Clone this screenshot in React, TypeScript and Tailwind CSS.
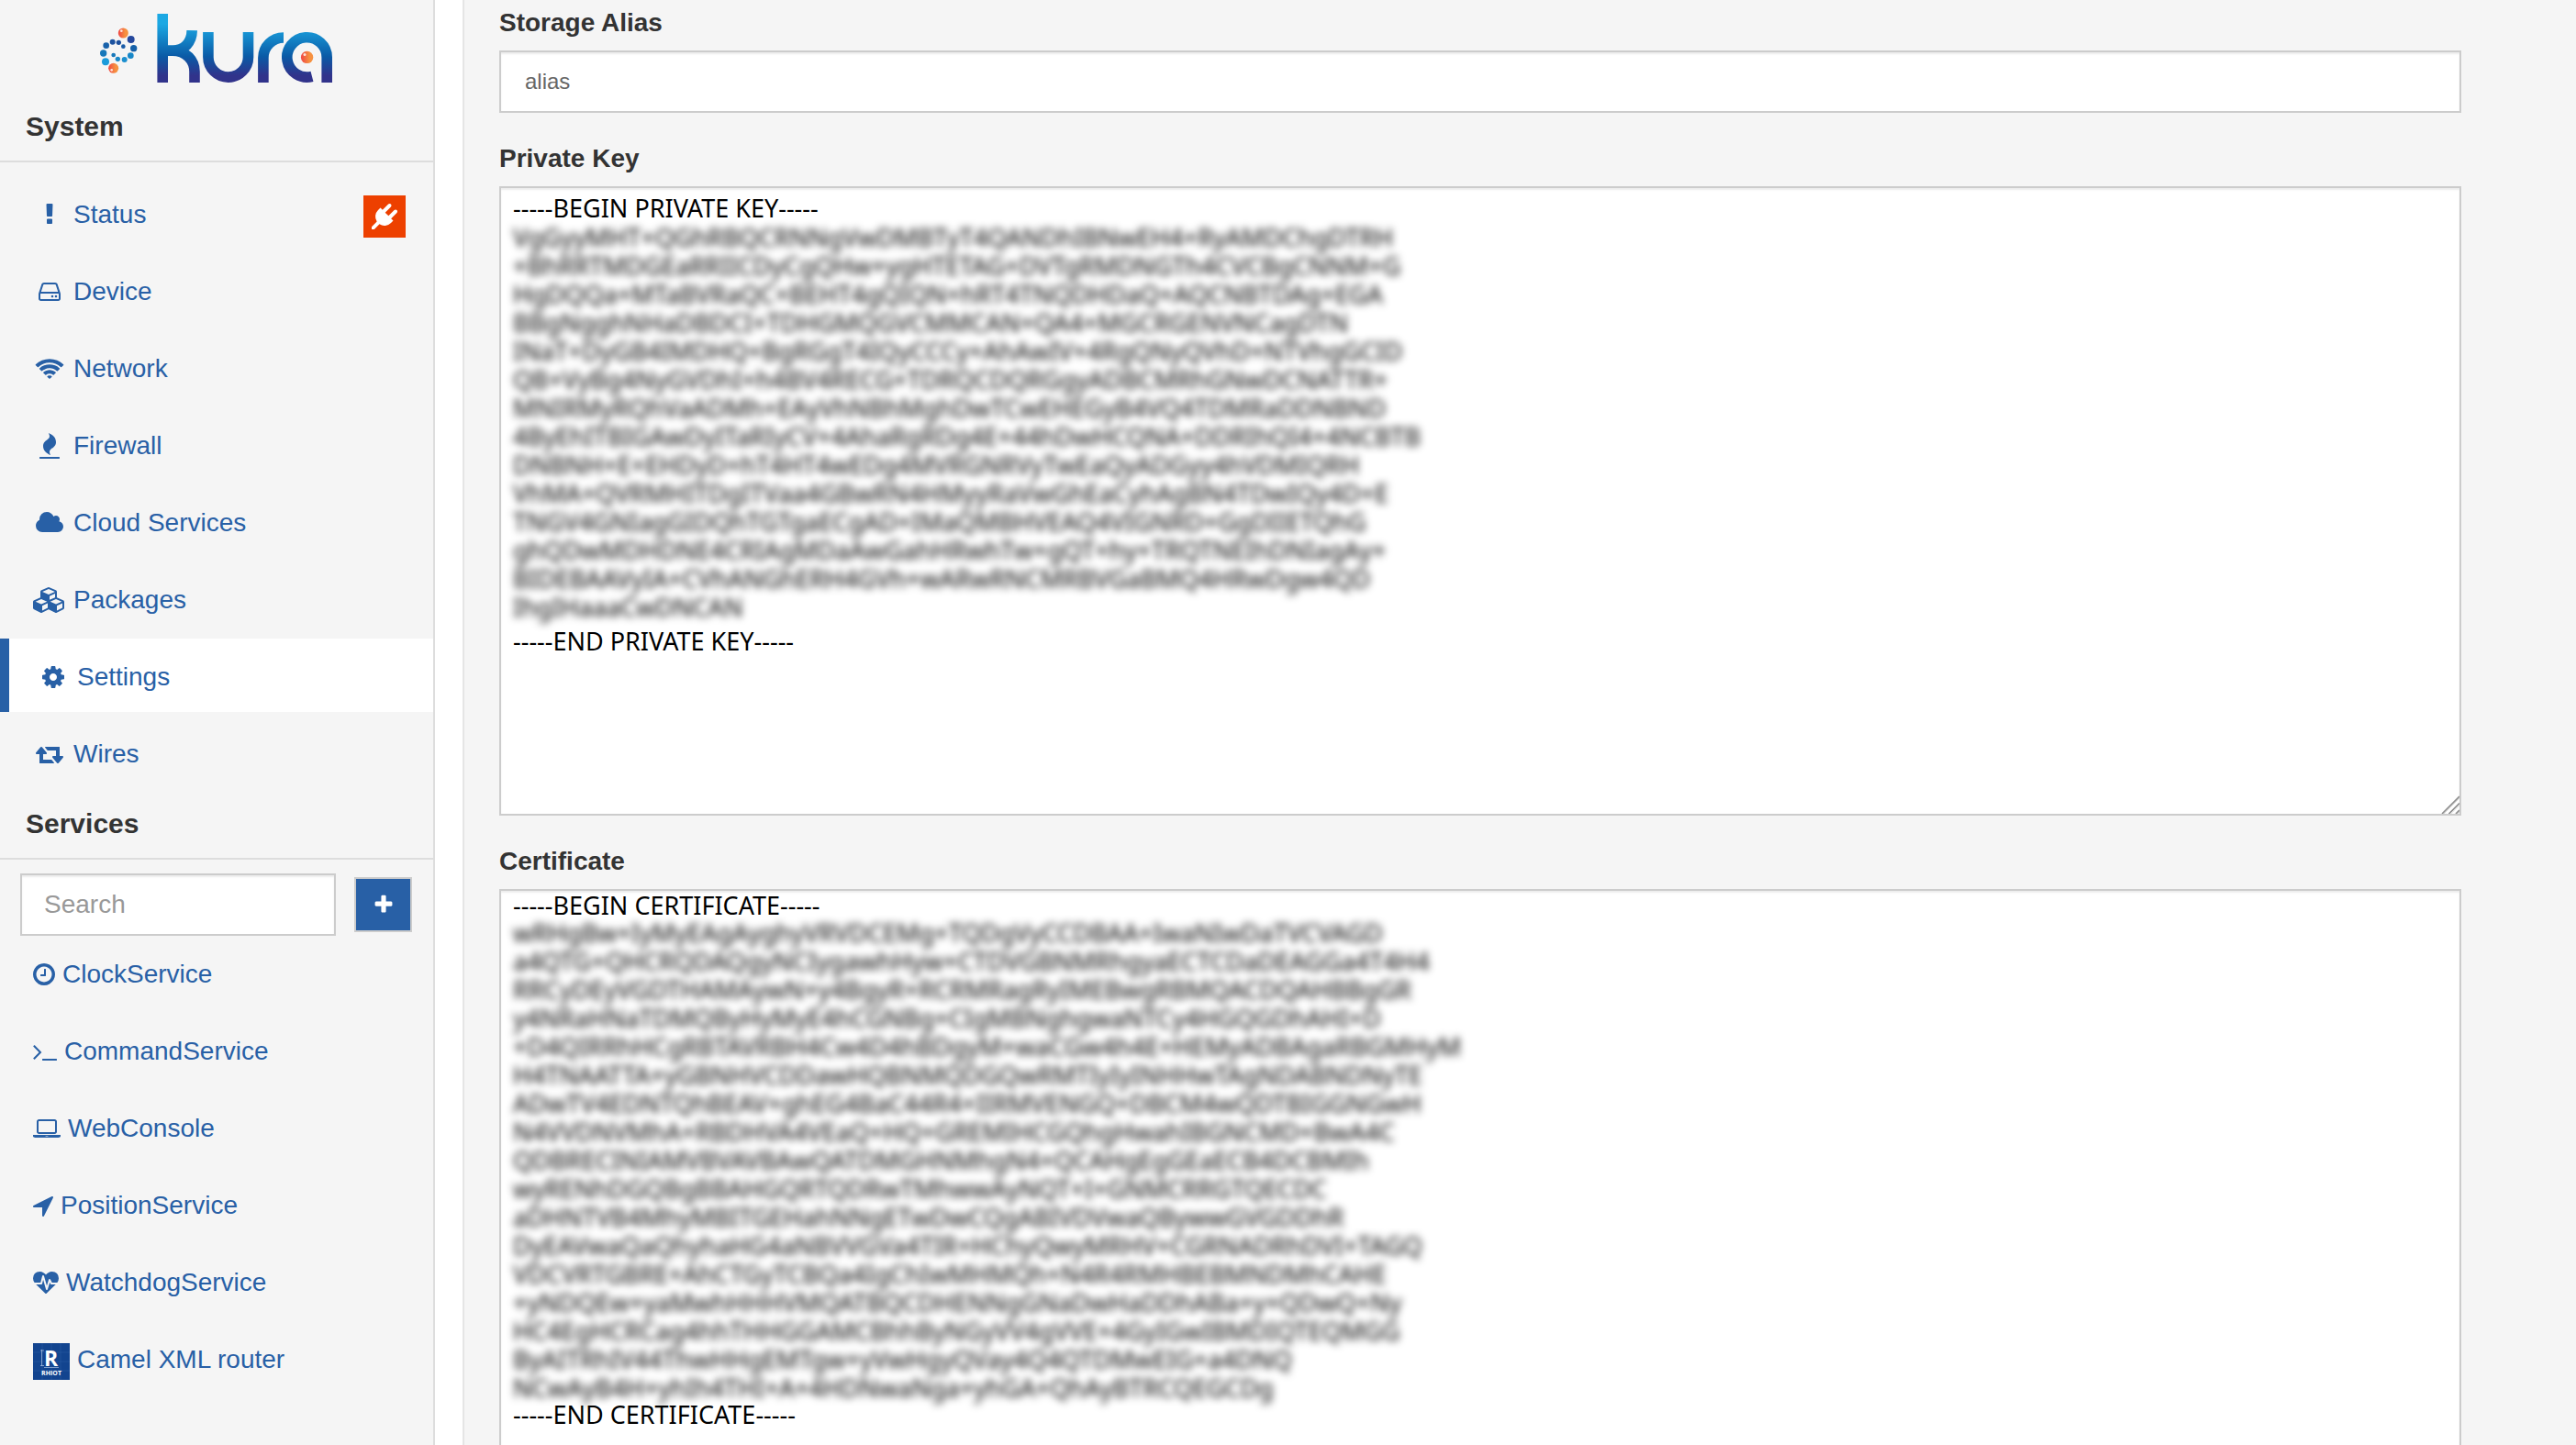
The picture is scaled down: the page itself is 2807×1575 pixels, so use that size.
import React from "react";

type IconDef = { box: string; w: number; d: string };

// Outline icons on a 1792-unit em; 64 units are one pixel at the menu's size.
const icons: Record<string, IconDef> = {
  exclamation: {
    box: "0 0 1792 1792",
    w: 28,
    d: "M1088 1248v224q0 26-19 45t-45 19h-256q-26 0-45-19t-19-45v-224q0-26 19-45t45-19h256q26 0 45 19t19 45zm30-1056l-28 768q-1 26-20.5 45t-45.5 19h-256q-26 0-45.5-19t-20.5-45l-28-768q-1-26 17.5-45t44.5-19h320q26 0 44.5 19t17.5 45z",
  },
  drive: {
    box: "0 0 1792 1792",
    w: 28,
    d: "M1168 1216q0 33-23.5 56.5t-56.5 23.5-56.5-23.5-23.5-56.5 23.5-56.5 56.5-23.5 56.5 23.5 23.5 56.5zm256 0q0 33-23.5 56.5t-56.5 23.5-56.5-23.5-23.5-56.5 23.5-56.5 56.5-23.5 56.5 23.5 23.5 56.5zm112 160v-320q0-13-9.5-22.5t-22.5-9.5h-1216q-13 0-22.5 9.5t-9.5 22.5v320q0 13 9.5 22.5t22.5 9.5h1216q13 0 22.5-9.5t9.5-22.5zm-1230-480h1180l-157-482q-4-13-16-21.5t-26-8.5h-782q-14 0-26 8.5t-16 21.5zm1358 160v320q0 66-47 113t-113 47h-1216q-66 0-113-47t-47-113v-320q0-25 16-75l197-606q17-53 63-86t101-33h782q55 0 101 33t63 86l197 606q16 50 16 75z",
  },
  wifi: {
    box: "0 0 1792 1792",
    w: 28,
    d: "M896 1600q-20 0-93-73.5t-73-93.5q0-32 62.5-54t103.5-22 103.5 22 62.5 54q0 20-73 93.5t-93 73.5zm270-271q-2 0-40-25t-101.5-50-128.5-25-128.5 25-101 50-40.5 25q-18 0-93.5-75t-75.5-93q0-13 10-23 78-77 196-121t233-44 233 44 196 121q10 10 10 23 0 18-75.5 93t-93.5 75zm273-272q-11 0-23-8-136-105-252-154.5t-268-49.5q-85 0-170.5 22t-149 53-113.5 62-79 53-31 22q-17 0-92-75t-75-93q0-12 10-22 132-132 320-205t380-73 380 73 320 205q10 10 10 22 0 18-75 93t-92 75zm271-271q-11 0-22-9-179-157-371.5-236.5t-420.5-79.5-420.5 79.5-371.5 236.5q-11 9-22 9-17 0-92.5-75t-75.5-93q0-13 10-23 187-186 445-288t527-102 527 102 445 288q10 10 10 23 0 18-75.5 93t-92.5 75z",
  },
  fire: {
    box: "0 0 1792 1792",
    w: 28,
    d: "M1600 1696v64q0 13-9.5 22.5t-22.5 9.5h-1344q-13 0-22.5-9.5t-9.5-22.5v-64q0-13 9.5-22.5t22.5-9.5h1344q13 0 22.5 9.5t9.5 22.5zm-256-1056q0 78-24.5 144t-64 112.5-87.5 88-96 77.5-87.5 72-64 81.5-24.5 96.5q0 96 67 224l-4-1 1 1q-90-41-160-83t-138.5-100-113.5-122.5-72.5-150.5-27.5-184q0-78 24.5-144t64-112.5 87.5-88 96-77.5 87.5-72 64-81.5 24.5-96.5q0-94-66-224l3 1-1-1q90 41 160 83t138.5 100 113.5 122.5 72.5 150.5 27.5 184z",
  },
  cloud: {
    box: "0 0 1792 1792",
    w: 28,
    d: "M1856 1152q0 159-112.5 271.5t-271.5 112.5h-1088q-185 0-316.5-131.5t-131.5-316.5q0-132 71-241.5t187-163.5q-2-28-2-43 0-212 150-362t362-150q158 0 286.5 88t187.5 230q70-62 166-62 106 0 181 75t75 181q0 75-41 138 129 30 213 134.5t84 239.5z",
  },
  cubes: {
    box: "0 0 2304 1792",
    w: 36,
    d: "M640 1632l384-192v-314l-384 164v342zm-64-454l404-173-404-173-404 173zm1088 454l384-192v-314l-384 164v342zm-64-454l404-173-404-173-404 173zm-448-293l384-165v-266l-384 164v267zm-64-379l441-189-441-189-441 189zm1088 518v416q0 36-19 67t-52 47l-448 224q-25 14-57 14t-57-14l-448-224q-4-2-7-4-2 2-7 4l-448 224q-25 14-57 14t-57-14l-448-224q-33-16-52-47t-19-67v-416q0-38 21.5-70t56.5-48l434-186v-400q0-38 21.5-70t56.5-48l448-192q23-10 50-10t50 10l448 192q35 16 56.5 48t21.5 70v400l434 186q36 16 57 48t21 70z",
  },
  cog: {
    box: "0 0 1792 1792",
    w: 28,
    d: "M1152 896q0-106-75-181t-181-75-181 75-75 181 75 181 181 75 181-75 75-181zm512-109v222q0 12-8 23t-20 13l-185 28q-19 54-39 91 35 50 107 138 10 12 10 25t-9 23q-27 37-99 108t-94 71q-12 0-26-9l-138-108q-44 23-91 38-16 136-29 186-7 28-36 28h-222q-14 0-24.5-8.5t-11.5-21.5l-28-184q-49-16-90-37l-141 107q-10 9-25 9-14 0-25-11-126-114-165-168-7-10-7-23 0-12 8-23 15-21 51-66.5t54-70.5q-27-50-41-99l-183-27q-13-2-21-12.5t-8-23.5v-222q0-12 8-23t19-13l186-28q14-46 39-92-40-57-107-138-10-12-10-24 0-10 9-23 26-36 98.5-107.5t94.5-71.5q13 0 26 10l138 107q44-23 91-38 16-136 29-186 7-28 36-28h222q14 0 24.5 8.5t11.5 21.5l28 184q49 16 90 37l142-107q9-9 24-9 13 0 25 10 129 119 165 170 7 8 7 22 0 12-8 23-15 21-51 66.5t-54 70.5q26 50 41 98l183 28q13 2 21 12.5t8 23.5z",
  },
  retweet: {
    box: "0 0 1792 1792",
    w: 28,
    d: "M1216 1504q0 13-9.5 22.5t-22.5 9.5h-960q-8 0-13.5-2t-9-7-5.5-8-3-11.5-1-11.5v-600h-192q-26 0-45-19t-19-45q0-24 15-41l320-384q19-22 49-22t49 22l320 384q15 17 15 41 0 26-19 45t-45 19h-192v384h576q16 0 25 11l160 192q7 10 7 21zm640-416q0 24-15 41l-320 384q-20 23-49 23t-49-23l-320-384q-15-17-15-41 0-26 19-45t45-19h192v-384h-576q-16 0-25-12l-160-192q-7-9-7-20 0-13 9.5-22.5t22.5-9.5h960q8 0 13.5 2t9 7 5.5 8 3 11.5 1 11.5v600h192q26 0 45 19t19 45z",
  },
  plug: {
    box: "0 0 1792 1792",
    w: 28,
    d: "M1755 453q37 38 37 90.5t-37 90.5l-401 400 150 150-160 160q-163 163-389.5 186.5t-411.5-100.5l-362 362h-181v-181l362-362q-124-185-100.5-411.5t186.5-389.5l160-160 150 150 400-401q38-37 91-37t90 37 37 90.5-37 90.5l-400 401 234 234 401-400q38-37 91-37t90 37z",
  },
  plus: {
    box: "0 0 1792 1792",
    w: 24,
    d: "M1600 736v192q0 40-28 68t-68 28h-416v416q0 40-28 68t-68 28h-192q-40 0-68-28t-28-68v-416h-416q-40 0-68-28t-28-68v-192q0-40 28-68t68-28h416v-416q0-40 28-68t68-28h192q40 0 68 28t28 68v416h416q40 0 68 28t28 68z",
  },
  clock: {
    box: "128 0 1536 1792",
    w: 24,
    d: "M1024 544v448q0 14-9 23t-23 9h-320q-14 0-23-9t-9-23v-64q0-14 9-23t23-9h224v-352q0-14 9-23t23-9h64q14 0 23 9t9 23zm416 352q0-148-73-273t-198-198-273-73-273 73-198 198-73 273 73 273 198 198 273 73 273-73 198-198 73-273zm224 0q0 209-103 385.5t-279.5 279.5-385.5 103-385.5-103-279.5-279.5-103-385.5 103-385.5 279.5-279.5 385.5-103 385.5 103 279.5 279.5 103 385.5z",
  },
  terminal: {
    box: "64 0 1664 1792",
    w: 26,
    d: "M649 983l-466 466q-10 10-23 10t-23-10l-50-50q-10-10-10-23t10-23l393-393-393-393q-10-10-10-23t10-23l50-50q10-10 23-10t23 10l466 466q10 10 10 23t-10 23zm1079 457v64q0 14-9 23t-23 9h-960q-14 0-23-9t-9-23v-64q0-14 9-23t23-9h960q14 0 23 9t9 23z",
  },
  laptop: {
    box: "0 0 1920 1792",
    w: 30,
    d: "M416 1280q-66 0-113-47t-47-113v-704q0-66 47-113t113-47h1088q66 0 113 47t47 113v704q0 66-47 113t-113 47h-1088zm-32-864v704q0 13 9.5 22.5t22.5 9.5h1088q13 0 22.5-9.5t9.5-22.5v-704q0-13-9.5-22.5t-22.5-9.5h-1088q-13 0-22.5 9.5t-9.5 22.5zm1376 928h160v96q0 40-47 68t-113 28h-1600q-66 0-113-28t-47-68v-96h1760zm-720 96q16 0 16-16t-16-16h-160q-16 0-16 16t16 16h160z",
  },
  arrow: {
    box: "192 0 1408 1792",
    w: 22,
    d: "M1593 349l-640 1280q-17 35-57 35-5 0-15-2-22-5-35.5-22.5t-13.5-39.5v-576h-576q-22 0-39.5-13.5t-22.5-35.5 4-42 29-30l1280-640q13-7 29-7 27 0 45 19 15 14 18.5 34.5t-6.5 39.5z",
  },
  heartbeat: {
    box: "0 0 1792 1792",
    w: 28,
    d: "M1280 1024h305q-5 6-10 10.5t-9 7.5l-3 4-623 600q-18 18-44 18t-44-18l-624-602q-5-2-21-20h369q22 0 39.5-13.5t22.5-34.5l70-281 190 667q6 20 23 33t39 13q21 0 38-13t23-33l146-485 56 112q18 35 57 35zm512-428q0 145-103 300h-369l-111-221q-8-17-25.5-27t-36.5-8q-45 5-56 46l-129 430-196-686q-6-20-23.5-33t-39.5-13-39 13.5-22 34.5l-116 464h-423q-103-155-103-300 0-220 127-344t351-124q62 0 126.5 21.5t120 58 95.5 68.5 76 68q36-36 76-68t95.5-68.5 120-58 126.5-21.5q224 0 351 124t127 344z",
  },
};

function Icon({ name }: { name: string }) {
  const { box, w, d } = icons[name];
  return (
    <svg
      viewBox={box}
      width={w}
      height={name === "plus" ? 24 : 28}
      className="shrink-0 overflow-visible fill-current"
      aria-hidden="true"
    >
      <path d={d} />
    </svg>
  );
}

const blueDots = [
  [428, 129, 12, "#25479c"],
  [437, 158, 11, "#1560a8"],
  [427, 182, 10, "#1787c8"],
  [407, 195, 9, "#1b8fcf"],
  [385, 193, 8, "#1a88c8"],
  [371, 180, 7, "#1778ba"],
  [403, 152, 7, "#1a5ba6"],
  [388, 139, 8, "#1b4f9d"],
  [368, 137, 9, "#1c529f"],
  [347, 149, 10, "#1761aa"],
  [338, 174, 11, "#1778ba"],
  [345, 202, 12, "#1b9bdb"],
] as const;

function KuraLogo() {
  return (
    <svg viewBox="108 14 256 77" width="256" height="77" role="img" aria-label="Kura">
      <defs>
        <linearGradient id="letters" gradientUnits="userSpaceOnUse" x1="0" y1="15" x2="0" y2="90">
          <stop offset="0.15" stopColor="#1ca8e3" />
          <stop offset="0.62" stopColor="#0a5aa6" />
          <stop offset="0.9" stopColor="#31338b" />
        </linearGradient>
        <linearGradient id="ball">
          <stop offset="0.05" stopColor="#f04b43" />
          <stop offset="0.7" stopColor="#f69140" />
        </linearGradient>
      </defs>
      <g fill="none" stroke="url(#letters)" strokeWidth="11.6">
        <path d="M171.400 15H183V90H171.400Z" fill="url(#letters)" stroke="none" />
        <path d="M182 55.2H188C201 55.2 209 46 209.2 33.2" />
        <path d="M182 55.2H188C203 55.2 212 66 212 78V90" />
        <path d="M226.9 35V62.3A21.8 21.8 0 0 0 270.5 62.3V35" />
        <path d="M286.9 90V63A22 22 0 0 1 309 41" />
        <path d="M340 83.4A21.7 21.7 0 1 1 356.2 62.5V90" />
      </g>
      <circle cx="334.6" cy="62.4" r="6.7" fill="url(#ball)" />
      <circle cx="332" cy="59.6" r="1.5" fill="#fde3dc" />
      <g transform="scale(0.33333)">
        {blueDots.map(([x, y, r, c]) => (
          <circle key={`${x}-${y}`} cx={x} cy={y} r={r} fill={c} />
        ))}
        <circle cx="403" cy="108" r="16.5" fill="url(#ball)" />
        <circle cx="397" cy="101" r="4" fill="#fde3dc" />
        <circle cx="371" cy="223" r="16.5" fill="url(#ball)" />
        <circle cx="365" cy="229" r="4" fill="#fde3dc" />
      </g>
    </svg>
  );
}

function RhiotLogo() {
  return (
    <svg viewBox="0 0 40 40" width="40" height="40" className="mt-1 shrink-0" aria-hidden="true">
      <rect width="40" height="40" fill="#12448f" />
      <g stroke="#2a5ba3" strokeWidth="0.6">
        <path d="M10 0V40M20 0V40M30 0V40M0 10H40M0 20H40M0 30H40" />
      </g>
      <path d="M9.5 7V25M8 8H12M8 24.500H12M12 26.500H28" stroke="#9db6da" strokeWidth="0.8" fill="none" />
      <text x="19.500" y="24.500" textAnchor="middle" fontSize="23" fontWeight="700" fill="#fff" fontFamily="Open Sans, sans-serif">
        R
      </text>
      <text x="20" y="34.500" textAnchor="middle" fontSize="7" fontWeight="700" fill="#fff" fontFamily="Open Sans, sans-serif">
        RHIOT
      </text>
    </svg>
  );
}

function Heading({ children }: { children: React.ReactNode }) {
  return (
    <h2 className="border-b-2 border-[#dddddd] px-7 pt-[18px] pb-[17px] text-[30px] leading-10 font-bold text-[#333333]">
      {children}
    </h2>
  );
}

const systemItems = [
  { icon: "exclamation", label: "Status", alert: true },
  { icon: "drive", label: "Device" },
  { icon: "wifi", label: "Network" },
  { icon: "fire", label: "Firewall" },
  { icon: "cloud", label: "Cloud Services" },
  { icon: "cubes", label: "Packages" },
  { icon: "cog", label: "Settings", active: true },
  { icon: "retweet", label: "Wires" },
];

const serviceItems = [
  { icon: "clock", label: "ClockService" },
  { icon: "terminal", label: "CommandService" },
  { icon: "laptop", label: "WebConsole" },
  { icon: "arrow", label: "PositionService" },
  { icon: "heartbeat", label: "WatchdogService" },
  { icon: "rhiot", label: "Camel XML router" },
];

function Sidebar() {
  return (
    <aside className="w-[474px] shrink-0 border-r-2 border-[#dddddd] bg-[#f5f5f5]">
      <div className="flex h-[100px] justify-center pt-3.5">
        <KuraLogo />
      </div>
      <Heading>System</Heading>
      <nav aria-label="System" className="pt-[15px]">
        <ul className="flex flex-col gap-1">
          {systemItems.map((item) => (
            <li key={item.label}>
              <a
                href="#"
                aria-current={item.active ? "page" : undefined}
                className={
                  item.active
                    ? "flex h-20 items-center gap-2 border-l-10 border-[#2860a6] bg-white pt-[3px] pr-[30px] pl-[30px]"
                    : "flex h-20 items-center gap-2 pt-[3px] pr-[30px] pl-9"
                }
              >
                <span className="flex w-9 justify-center">
                  <Icon name={item.icon} />
                </span>
                {item.label}
                {item.alert && (
                  <span className="mt-1 ml-auto flex size-[46px] items-center justify-center bg-[#ed4000] text-white">
                    <Icon name="plug" />
                  </span>
                )}
              </a>
            </li>
          ))}
        </ul>
      </nav>
      <Heading>Services</Heading>
      <div className="flex items-center gap-5 pt-[15px] pr-[23px] pl-[22px]">
        <input
          type="text"
          aria-label="Search services"
          placeholder="Search"
          className="h-[68px] min-w-0 flex-1 border-2 border-[#cccccc] bg-white px-6 text-[28px] text-[#555555] shadow-[inset_0_2px_2px_rgba(0,0,0,0.075)] placeholder:text-[#999999]"
        />
        <button
          type="button"
          aria-label="Add service"
          className="flex h-[60px] w-[63px] items-center justify-center border-2 border-[#cccccc] bg-[#2860a6] text-white"
        >
          <Icon name="plus" />
        </button>
      </div>
      <nav aria-label="Services">
        <ul className="flex flex-col gap-1">
          {serviceItems.map((item) => (
            <li key={item.label}>
              <a href="#" className="flex h-20 items-center gap-2 pt-[3px] pl-9">
                {item.icon === "rhiot" ? <RhiotLogo /> : <Icon name={item.icon} />}
                {item.label}
              </a>
            </li>
          ))}
        </ul>
      </nav>
    </aside>
  );
}

// Advance widths of the masking characters, in thousandths of an em.
const maskChars: [string, number][] = [
  ["A", 639], ["g", 615], ["B", 650], ["N", 760], ["h", 618], ["I", 339], ["Q", 781], ["w", 786],
  ["E", 556], ["M", 907], ["a", 561], ["R", 622], ["4", 572], ["D", 729], ["y", 510], ["C", 632],
  ["V", 600], ["+", 572], ["G", 728], ["T", 556], ["H", 741],
];

// Builds meaningless text about `width` pixels wide at 27px.
function mask(width: number, seed: number) {
  let text = "";
  let used = 0;
  let n = seed * 7919 + 17;
  while (used < width - 8) {
    n = (n * 1103515 + 12345) % 2147483;
    const [char, advance] = maskChars[n % maskChars.length];
    text += char;
    used += (advance * 27) / 1000;
  }
  return text;
}

const keyLines = [968, 962, 945, 914, 970, 960, 954, 987, 914, 948, 924, 958, 938, 238].map(
  (width, i) => mask(width, i),
);
const certificateLines = [
  951, 1006, 982, 950, 1041, 996, 991, 957, 936, 890, 908, 1001, 961, 965, 968, 852, 834,
].map((width, i) => mask(width, i + 40));

const labelClass = "mb-2.5 block text-[28px] leading-10 font-bold text-[#333333]";

function PemField({
  id,
  label,
  first,
  last,
  lines,
  areaClass,
  maskClass,
}: {
  id: string;
  label: string;
  first: string;
  last: string;
  lines: string[];
  areaClass: string;
  maskClass: string;
}) {
  return (
    <div className="mb-[30px]">
      <label htmlFor={id} className={labelClass}>
        {label}
      </label>
      <div className="relative font-['Noto_Sans',sans-serif] text-[27px] text-black">
        <textarea
          id={id}
          defaultValue={first}
          spellCheck={false}
          className={`block h-[686px] w-full resize-none border-2 border-[#cccccc] bg-white px-[13px] leading-7 shadow-[inset_0_2px_2px_rgba(0,0,0,0.075)] ${areaClass}`}
        />
        <div className={`pointer-events-none absolute left-[15px] whitespace-nowrap ${maskClass}`}>
          <p aria-hidden="true" className="leading-[31px] whitespace-pre blur-[4px] select-none">
            {lines.join("\n")}
          </p>
          <p className="leading-7">{last}</p>
        </div>
        <svg
          viewBox="0 0 20 20"
          className="pointer-events-none absolute right-0.5 bottom-0.5 size-5"
          fill="none"
          aria-hidden="true"
        >
          <path d="M1 20L20 1M8.500 20L20 8.500M16 20L20 16" stroke="#8c8c8c" strokeWidth="1.600" />
          <path d="M3 20L20 3M10.500 20L20 10.500M18 20L20 18" stroke="#d9d9d9" strokeWidth="1" />
        </svg>
      </div>
    </div>
  );
}

export default function App() {
  return (
    <div className="flex h-screen overflow-hidden bg-white font-['Liberation_Sans',Arial,sans-serif] text-[28px] leading-10 text-[#2860a6]">
      <Sidebar />
      <main className="ml-[30px] min-w-0 flex-1 overflow-hidden border-l-2 border-[#e5e5e5] bg-[#f5f5f5] pt-[5px] pr-[125px] pl-[38px]">
        <form>
          <div className="mb-[30px]">
            <label htmlFor="alias" className={labelClass}>
              Storage Alias
            </label>
            <input
              id="alias"
              type="text"
              defaultValue="alias"
              className="block h-[68px] w-full border-2 border-[#cccccc] bg-white px-[26px] text-[24px] text-[#666666] shadow-[inset_0_2px_2px_rgba(0,0,0,0.075)]"
            />
          </div>
          <PemField
            id="private-key"
            label="Private Key"
            first="-----BEGIN PRIVATE KEY-----"
            last="-----END PRIVATE KEY-----"
            lines={keyLines}
            areaClass="pt-2"
            maskClass="top-[38px] flex flex-col gap-2 pt-0.5"
          />
          <PemField
            id="certificate"
            label="Certificate"
            first="-----BEGIN CERTIFICATE-----"
            last="-----END CERTIFICATE-----"
            lines={certificateLines}
            areaClass="pt-0.5"
            maskClass="top-8"
          />
        </form>
      </main>
    </div>
  );
}
